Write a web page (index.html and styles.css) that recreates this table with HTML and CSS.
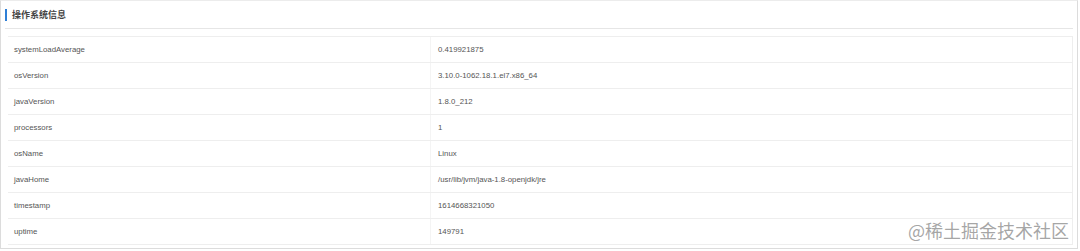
FILE: index.html
```html
<!DOCTYPE html>
<html>
<head>
<meta charset="utf-8">
<link rel="stylesheet" href="styles.css">
</head>
<body>
<div class="card">
  <div class="card-header"><span class="title">操作系统信息</span></div>
  <div class="card-body">
    <table class="info">
      <tr><td class="k">systemLoadAverage</td><td class="v">0.419921875</td></tr>
      <tr><td class="k">osVersion</td><td class="v">3.10.0-1062.18.1.el7.x86_64</td></tr>
      <tr><td class="k">javaVersion</td><td class="v">1.8.0_212</td></tr>
      <tr><td class="k">processors</td><td class="v">1</td></tr>
      <tr><td class="k">osName</td><td class="v">Linux</td></tr>
      <tr><td class="k">javaHome</td><td class="v">/usr/lib/jvm/java-1.8-openjdk/jre</td></tr>
      <tr><td class="k">timestamp</td><td class="v">1614668321050</td></tr>
      <tr><td class="k">uptime</td><td class="v">149791</td></tr>
    </table>
  </div>
</div>
<div class="watermark">@稀土掘金技术社区</div>
</body>
</html>
```
FILE: styles.css
```css
html, body {
  margin: 0;
  padding: 0;
  background: #ffffff;
}
body {
  font-family: "Liberation Sans", "Noto Sans CJK SC", sans-serif;
  color: #555;
  width: 1080px;
  height: 251px;
  position: relative;
  overflow: hidden;
}
.card {
  box-sizing: border-box;
  width: 1078px;
  height: 249px;
  border: 1px solid #dcdcdc;
  border-top-color: #ececec;
  padding: 0 4px 0 4px;
}
.card-header {
  height: 27px;
  border-bottom: 1px solid #e6e6e6;
  display: flex;
  align-items: center;
}
.title {
  border-left: 2px solid #2f7fd6;
  padding-left: 5px;
  font-size: 9px;
  line-height: 12px;
  font-weight: bold;
  color: #444;
  font-family: "Noto Sans CJK SC", sans-serif;
}
.card-body {
  padding: 7px 1px 0 3px;
}
.info {
  width: 1065px;
  border-collapse: collapse;
  border-right: 1px solid #eeeeee;
  font-size: 7.8px;
  color: #555555;
}
.info tr {
  height: 26px;
}
.info td {
  border-top: 1px solid #eeeeee;
  border-bottom: 1px solid #eeeeee;
  padding: 0 6px;
  vertical-align: middle;
}
.info td.k {
  width: 410px;
}
.info td.v {
  border-left: 1px solid #f4f4f4;
  padding-left: 7px;
}
.watermark {
  position: absolute;
  left: 908px;
  top: 218px;
  font-size: 18px;
  line-height: 24px;
  color: rgba(150, 150, 150, 0.85);
  font-family: "Noto Sans CJK SC", sans-serif;
}
```
